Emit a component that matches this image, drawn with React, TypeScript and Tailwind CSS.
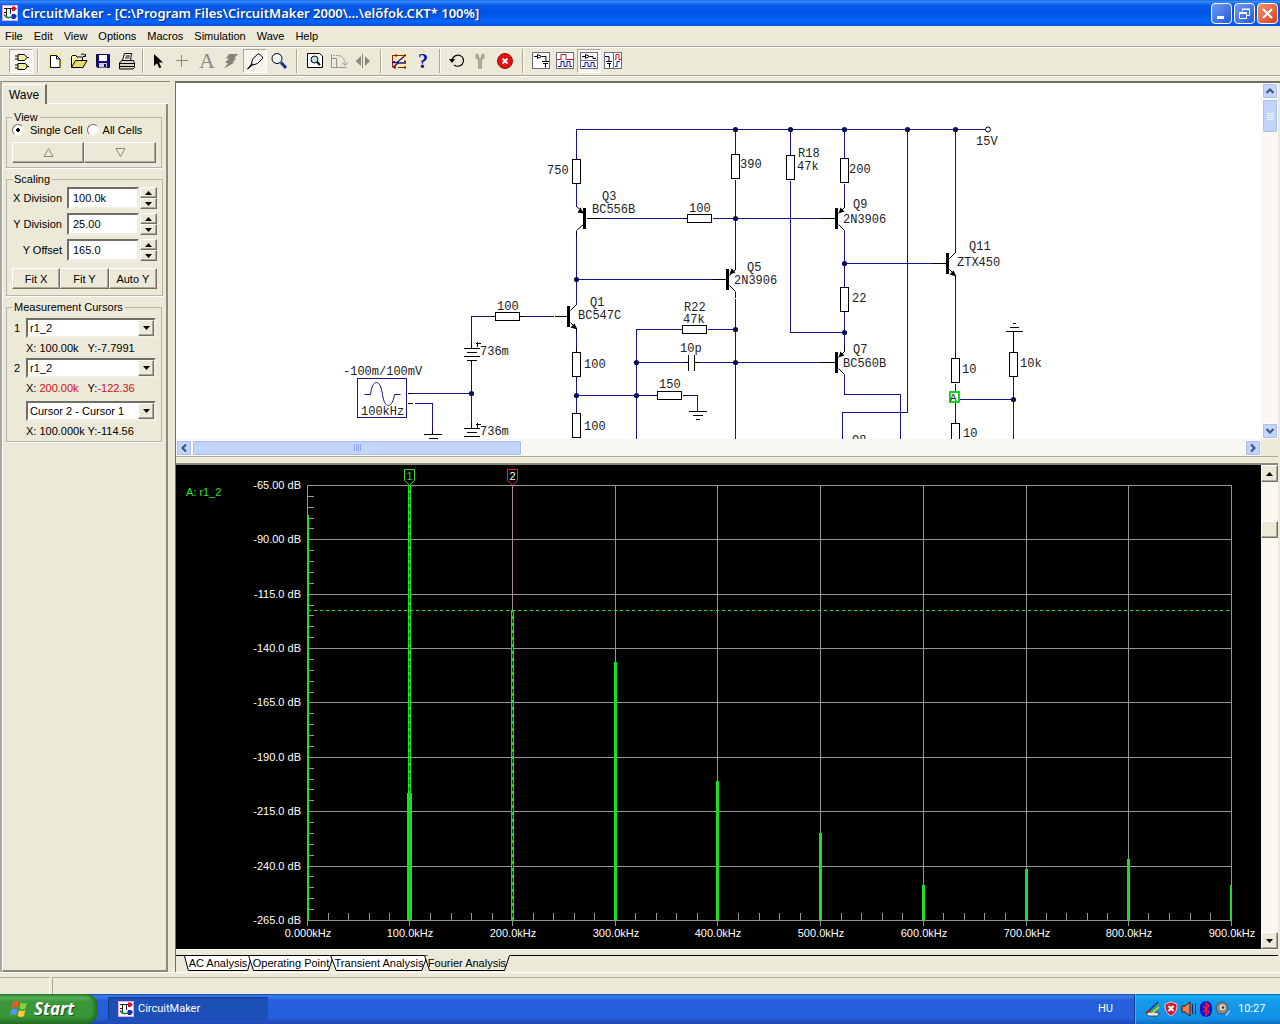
import React from 'react';

const MENUS = ['File', 'Edit', 'View', 'Options', 'Macros', 'Simulation', 'Wave', 'Help'];

const bevel = 'bg-[#ece9d8] border border-t-white border-l-white border-r-[#716f64] border-b-[#716f64] shadow-[inset_-1px_-1px_0_#aca899]';
const sunken = 'bg-white border-2 border-t-[#716f64] border-l-[#716f64] border-r-[#f1efe2] border-b-[#f1efe2]';

/* ---------- icons ---------- */

const AppIcon = () => (
  <svg width="16" height="16" viewBox="0 0 16 16" className="shrink-0" aria-hidden="true">
    <rect width="16" height="16" fill="#fff" stroke="#e9a6dc" strokeWidth="2" />
    <path d="M2 3.500H10M2 7.500H5M4.500 3V12.500H9M8.500 4V9" stroke="#222" fill="none" />
    <path d="M10 1.500h2.500l2.500 2-2.500 2.500H10z" fill="#d3142c" />
    <path d="M10 9h3l2 2-2 3h-3l-1-2z" fill="#1a2bb8" />
    <path d="M2 9.500c2 3 5 4 8 2" stroke="#1d8a4c" fill="none" strokeWidth="1.500" />
  </svg>
);

type IconProps = { children: React.ReactNode };
const Ico = ({ children }: IconProps) => (
  <svg width="20" height="20" viewBox="0 0 20 20" fill="none" stroke="#000" className="shrink-0" aria-hidden="true">
    {children}
  </svg>
);

const icons: Record<string, React.ReactNode> = {
  gates: (
    <Ico>
      <path d="M7 3.500h6.500l2.500 3-2.500 3H7zM7 12.500h7l2 1.500v2l-2 2.500H7z" fill="#f4f0a0" />
      <path d="M4 5h3M4 8h3M16 6.500h2M4 14h3M4 17h3M16 15.500h2" />
    </Ico>
  ),
  new: (
    <Ico>
      <path d="M3 2l3 3M9 1v3M16 2l-3 3M2 9h3M15 12h3M3 17l3-3M17 17l-3-3" stroke="#f3f065" strokeWidth="2" />
      <path d="M5.500 4.500h6l3.500 3.500v8.500h-9.500z" fill="#fff" />
      <path d="M11.500 4.500v3.500h3.500" />
    </Ico>
  ),
  open: (
    <Ico>
      <path d="M2.500 16V5.500l1-1h3.500l1 1.500h5.500v3" fill="#f7f3a0" />
      <path d="M2.500 16.500l4-7h11.500l-4 7z" fill="#e3dc6b" />
      <path d="M12 3.500c2-1 3.500-.5 4.500 1.500m0-2v2.500h-2.500" />
    </Ico>
  ),
  save: (
    <Ico>
      <path d="M3.500 3.500h13v13h-12l-1-1z" fill="#10107c" stroke="#0a0a50" />
      <path d="M6 4h8v6H6z" fill="#fff" stroke="none" />
      <path d="M6 12h8v4.500H6z" fill="#c8c8d8" stroke="none" />
      <path d="M11 13h2v3h-2z" fill="#10107c" stroke="none" />
    </Ico>
  ),
  print: (
    <Ico>
      <path d="M5.500 9.500l2-7h7l-1 7" fill="#fff" />
      <path d="M8.500 5h4.500M8 7h4.500" />
      <path d="M2.500 12l2-2.500h12l1 2v5l-1.500 1.500h-13.500z" fill="#d8d5c6" />
      <path d="M2.500 12.500h15M3 15.500h14" />
    </Ico>
  ),
  arrow: (
    <Ico>
      <path d="M5 3v12l3-2.800 2.300 5 2-.9-2.300-4.800h4z" fill="#000" stroke="none" />
    </Ico>
  ),
  plus: (
    <Ico>
      <path d="M3 9.500h12M8.500 4v12" stroke="#8c8a80" />
    </Ico>
  ),
  text: <span className="font-['Liberation_Serif',serif] text-[22px] leading-5 text-[#8a887e]">A</span>,
  bolt: (
    <Ico>
      <path d="M8 3h9l-4 4.500h2.500l-4 4h2L3 17.500l4-5.500H4l4-4.500H5z" fill="#85837a" stroke="none" />
    </Ico>
  ),
  probe: (
    <Ico>
      <path d="M2.500 18l4.500-5.500 1 1z" fill="#000" />
      <path d="M6.500 12l1.500-4.500 5-4.500h1.500l3 3v1.500l-5 5-4.500 1.500z" fill="#f6f4ec" />
    </Ico>
  ),
  zoom: (
    <Ico>
      <circle cx="8" cy="7.500" r="5" fill="#eef6f6" />
      <path d="M12 11.500l5 5.500" stroke="#1d2d9c" strokeWidth="3" />
    </Ico>
  ),
  fit: (
    <Ico>
      <path d="M2.500 2.500h12l3 2.500v11.500h-15z" fill="#fff" />
      <circle cx="9.500" cy="8.500" r="3.500" fill="#bfe3e0" />
      <path d="M12 11l3 3" strokeWidth="2" />
    </Ico>
  ),
  rotate: (
    <Ico>
      <path d="M2.500 3v13.500h15M2.500 7.500h5v9" stroke="#95938a" />
      <path d="M4 4.500h5c4 0 6.500 3 7 8" stroke="#95938a" strokeDasharray="2 1" />
      <path d="M13.500 11.500l2.500 3 2.500-3" stroke="#95938a" />
    </Ico>
  ),
  mirror: (
    <Ico>
      <path d="M8 5v10l-5.500-5zM12 5v10l5-5z" fill="#8c8a80" stroke="none" />
      <path d="M9.500 3v14" stroke="#8c8a80" />
    </Ico>
  ),
  wires: (
    <Ico>
      <rect x="3" y="2" width="15" height="16" fill="#f8f0b4" stroke="none" />
      <path d="M3 4.500h14M3.500 4.500v12M3 10.500h3M9 16.500h8" stroke="#b01818" />
      <path d="M3 11.500h5l7-6M4 16.500l5-4.500h8" stroke="#16168e" strokeWidth="1.400" />
      <path d="M6 3.500h2v2H6zM15 3.500h2v2h-2zM5 15.500h2v2H5zM15 9.500h2v2h-2zM15 15.500h2v2h-2z" fill="#8c1010" stroke="none" />
    </Ico>
  ),
  help: <span className="font-['Liberation_Serif',serif] text-xl leading-5 text-[#1414a0] font-bold">?</span>,
  reset: (
    <Ico>
      <path d="M5 9c1-4 5-5.500 8-4.500 4 1.500 4.500 6 2 9-2 2-5.500 2.300-8 .5" strokeWidth="1.200" />
      <path d="M2 8h6l-3 4z" fill="#000" stroke="none" />
    </Ico>
  ),
  wrench: (
    <Ico>
      <path d="M5 3v4l2.500 2v8c0 1 3 1 3 0V9l2.500-2V3l-2.500 1v3h-3V4z" fill="#b4b1a4" stroke="#a19e92" />
    </Ico>
  ),
  stop: (
    <Ico>
      <circle cx="10" cy="10" r="7.500" fill="#e01212" stroke="#a00a0a" />
      <path d="M7.500 7.500l5 5M12.500 7.500l-5 5" stroke="#fff" strokeWidth="1.800" />
    </Ico>
  ),
  schem: (
    <Ico>
      <rect x="1.500" y="1.500" width="17" height="16" fill="#fff" stroke="#6c6a80" />
      <path d="M3 5.500h3M6.500 3.500v4l4-2zM11 5.500h4v5M11 10.500h7M12 12.500h5M14.500 12.500v4" />
    </Ico>
  ),
  waves: (
    <Ico>
      <rect x="1.500" y="1.500" width="17" height="16" fill="#fff" stroke="#6c6a80" />
      <path d="M2 8.500h4v-5h5v5h7" stroke="#c01818" />
      <path d="M3 15.500h3v-5h3v5h3v-5h3v5h2" stroke="#16168e" />
    </Ico>
  ),
  split: (
    <Ico>
      <rect x="1.500" y="1.500" width="17" height="16" fill="#fff" stroke="#6c6a80" />
      <path d="M2 9.500h16" stroke="#6c6a80" />
      <path d="M3 5.500h3M6.500 3.500v4l4-2zM11 5.500h3v2h3" />
      <path d="M3 15.500h3v-4h3v4h3v-4h3v4h2" stroke="#16168e" />
    </Ico>
  ),
  side: (
    <Ico>
      <rect x="1.500" y="1.500" width="17" height="16" fill="#fff" stroke="#6c6a80" />
      <path d="M10.500 2v15" stroke="#6c6a80" />
      <path d="M2 5.500h4v5M3 10.500h6M4 12.500h4M6.500 12.500v4" />
      <path d="M12 8.500h1v-5h3v5h2" stroke="#c01818" />
      <path d="M12 15.500h2v-5h3" stroke="#16168e" />
    </Ico>
  ),
};

const TOOL_GROUPS: { gap: string; items: [string, string, boolean?][] }[] = [
  { gap: '', items: [['gates', 'Parts', true]] },
  { gap: 'w-2.5', items: [['new', 'New'], ['open', 'Open'], ['save', 'Save'], ['print', 'Print']] },
  { gap: 'w-2', items: [['arrow', 'Arrow'], ['plus', 'Wire'], ['text', 'Text'], ['bolt', 'Delete'], ['probe', 'Probe', true], ['zoom', 'Zoom']] },
  { gap: 'w-3', items: [['fit', 'Fit'], ['rotate', 'Rotate'], ['mirror', 'Mirror']] },
  { gap: 'w-3', items: [['wires', 'Mode'], ['help', 'Help']] },
  { gap: 'w-2.5', items: [['reset', 'Reset'], ['wrench', 'Setup'], ['stop', 'Stop']] },
  { gap: 'w-3', items: [['schem', 'Schematic'], ['waves', 'Waveforms'], ['split', 'Split horizontal', true], ['side', 'Split vertical']] },
];

const Toolbar = () => (
  <div className="flex h-[30px] items-center border-y border-[#aca899] pl-[9px] shadow-[inset_0_1px_0_#fff,0_1px_0_#fff]">
    {TOOL_GROUPS.map((group, i) => (
      <React.Fragment key={i}>
        {group.gap && (
          <div className={`${group.gap} flex h-6 justify-center`}>
            <div className="w-0.5 border-l border-[#aca899] bg-white" />
          </div>
        )}
        {group.items.map(([name, label, pressed]) => (
          <button
            key={name}
            aria-label={label}
            className={`flex size-6 items-center justify-center ${pressed ? 'border border-t-[#aca899] border-l-[#aca899] border-r-white border-b-white bg-[#f6f4ec]' : ''}`}
          >
            {icons[name]}
          </button>
        ))}
      </React.Fragment>
    ))}
  </div>
);

/* ---------- side panel ---------- */

const Group = ({ title, children }: { title: string; children: React.ReactNode }) => (
  <fieldset className="border border-[#b9b6a5] px-[5px] shadow-[0_1px_0_#fff]">
    <legend className="px-0.5 leading-3">{title}</legend>
    {children}
  </fieldset>
);

const Tri = ({ up = false }: { up?: boolean }) => (
  <svg width="7" height="4" viewBox="0 0 7 4" aria-hidden="true">
    <path d={up ? 'M0 4L3.500 0L7 4z' : 'M0 0L3.500 4L7 0z'} fill="#000" />
  </svg>
);

const ScaleRow = ({ label, value }: { label: string; value: string }) => (
  <div className="flex h-[22px] items-center">
    <label htmlFor={label} className="w-[50px] text-right whitespace-nowrap">{label}</label>
    <input id={label} defaultValue={value} className={`${sunken} ml-[5px] h-[22px] w-[72px] px-1`} />
    <div className="ml-px flex w-[17px] flex-col">
      <button aria-label={`${label} up`} className={`${bevel} flex h-[11px] items-center justify-center`}><Tri up /></button>
      <button aria-label={`${label} down`} className={`${bevel} flex h-[11px] items-center justify-center`}><Tri /></button>
    </div>
  </div>
);

const Combo = ({ label, value }: { label: string; value: string }) => (
  <div className="relative flex-1">
    <select aria-label={label} defaultValue={value} className={`${sunken} block h-5 w-full appearance-none px-0.5 leading-4`}>
      <option>{value}</option>
    </select>
    <span className={`${bevel} pointer-events-none absolute top-0.5 right-0.5 flex h-4 w-4 items-center justify-center`}>
      <Tri />
    </span>
  </div>
);

const SidePanel = () => (
  <aside className="flex w-[170px] shrink-0 flex-col border-t border-l-2 border-t-[#8b897c] border-l-[#aca899] pt-0.5 pr-0.5">
    <div className="flex h-5 items-end">
      <button className="h-5 w-[45px] border-t border-r-2 border-l border-t-white border-r-[#716f64] border-l-white text-[12px] leading-4">Wave</button>
      <div className="h-px flex-1 bg-white" />
    </div>
    <div className="flex flex-1 flex-col gap-[5px] border-r-2 border-b-2 border-l border-r-[#8b897c] border-b-[#8b897c] border-l-white px-[3px] pt-[7px] pr-1">
      <Group title="View">
        <div className="flex h-[19px] items-start">
          <label className="flex items-center gap-1.5 whitespace-nowrap">
            <input type="radio" name="cells" defaultChecked className="size-3 appearance-none rounded-full border border-t-[#716f64] border-l-[#716f64] border-r-[#f1efe2] border-b-[#f1efe2] bg-white bg-[radial-gradient(circle,#000_0_2px,#fff_2px)]" />
            Single Cell
          </label>
          <label className="ml-1 flex items-center gap-1 whitespace-nowrap">
            <input type="radio" name="cells" className="size-3 appearance-none rounded-full border border-t-[#716f64] border-l-[#716f64] border-r-[#f1efe2] border-b-[#f1efe2] bg-white" />
            All Cells
          </label>
        </div>
        <div className="mb-1 flex">
          {[true, false].map((up) => (
            <button key={String(up)} aria-label={up ? 'Previous cell' : 'Next cell'} className={`${bevel} flex h-[21px] flex-1 items-center justify-center`}>
              <svg width="11" height="9" viewBox="0 0 11 9" fill="none" stroke="#8b897c" aria-hidden="true">
                <path d={up ? 'M1 8.500L5.500 .5L10 8.500z' : 'M1 .5L5.500 8.500L10 .5z'} />
              </svg>
            </button>
          ))}
        </div>
      </Group>

      <Group title="Scaling">
        <div className="flex flex-col gap-1 pt-0.5">
          <ScaleRow label="X Division" value="100.0k" />
          <ScaleRow label="Y Division" value="25.00" />
          <ScaleRow label="Y Offset" value="165.0" />
        </div>
        <div className="mt-[7px] mb-1.5 flex">
          {['Fit X', 'Fit Y', 'Auto Y'].map((t) => (
            <button key={t} className={`${bevel} h-[21px] flex-1 whitespace-nowrap`}>{t}</button>
          ))}
        </div>
      </Group>

      <Group title="Measurement Cursors">
        <div className="flex gap-1.5 pt-[5px]">
          <span className="w-2 pl-0.5 leading-5">1</span>
          <Combo label="Cursor 1" value="r1_2" />
        </div>
        <p className="flex h-5 items-center pl-3.5 whitespace-pre">X: 100.00k   Y:-7.7991</p>
        <div className="flex gap-1.5">
          <span className="w-2 pl-0.5 leading-5">2</span>
          <Combo label="Cursor 2" value="r1_2" />
        </div>
        <p className="flex h-5 items-center pl-3.5 whitespace-pre">
          X: <span className="text-[#d01020]">200.00k</span>   Y:<span className="text-[#d01020]">-122.36</span>
        </p>
        <div className="mt-[3px] flex pl-3.5">
          <Combo label="Difference" value="Cursor 2 - Cursor 1" />
        </div>
        <p className="flex h-5 items-center pl-3.5 whitespace-pre">X: 100.000k Y:-114.56</p>
      </Group>
    </div>
  </aside>
);

/* ---------- schematic ---------- */

// Wires, in sheet coordinates
const WIRES =
  'M576 159V129H984M576 183V206M576 236V304M600 218H682M712 218H820M735 129V154M735 179V262M735 298V439' +
  'M790 129V155M790 180V332H844M844 129V158M844 183V200M844 230V287M844 311V345M844 263H932M576 279H712' +
  'M844 374V394H900V439M907 129V412H842V439M955 129V248M955 279V352M955 383V418M958 399H1013M1013 376V439' +
  'M471 342V316H489M524 316H553M471 364V422M412 393H471M414 403H432V430M576 332V347M576 376V413M576 395H652' +
  'M687 395H697V411M682 329H636V439M707 329H735M636 362H682M699 362H820';

const LEADS =
  'M576 154V159M576 183V189M576 230V236M586 218H600M682 218H687M712 218H722M820 218H835M712 279H726M735 262V269' +
  'M735 291V297M844 200V207M844 345V351M820 362H835M844 282V287M932 263H946M955 248V252M955 275V279M955 352V358' +
  'M955 383V388M955 418V423M1013 346V352M1013 331V346M1013 376V381M489 316H495M519 316H528M554 316H567M576 300V304' +
  'M576 328V334M576 347V352M576 376V381M576 407V413M652 395H657M682 395H687M682 362H688M694 362H703' +
  'M407 393H412M407 403H412M471 342V348M471 360V366M471 422V428M432 428V434' +
  'M463 348H479M466 352H476M463 356H479M466 360H476M463 428H479M466 432H476M463 436H479' +
  'M475 343H480M477 341V346M475 424H480M477 422V427' +
  'M688 354V370M694 354V370M423 434H441M428 438H437M688 411H706M692 415H702M695 419H699' +
  'M1012 323H1015M1009 327H1018M1005 331H1022';

const DIAGONALS =
  'M576 206L583 212M583 224L576 230M735 269L729 275M729 285L735 291M844 207L838 213M838 224L844 230' +
  'M844 351L838 357M838 368L844 374M955 252L949 258M949 269L955 275M576 304L570 310M570 322L576 328';

const ARROWS =
  'M583 213l-6-1 3-5zM729 274l6-2-4-4zM838 213l6-2-4-4zM838 357l6-2-4-4zM956 276l-7-2 4-4zM577 329l-7-2 4-4z';

const V_RESISTORS = [[576, 159], [735, 154], [790, 155], [844, 158], [844, 287], [576, 352], [576, 413], [955, 358], [955, 423], [1013, 352]];
const H_RESISTORS = [[687, 218], [495, 316], [682, 329], [657, 395]];
const BARS = [[583, 208], [567, 306], [726, 269], [835, 208], [835, 352], [946, 253]];
const DOTS = [[735, 129], [790, 129], [844, 129], [907, 129], [955, 129], [735, 218], [844, 263], [844, 332], [576, 279], [735, 329], [735, 362], [636, 362], [636, 395], [576, 395], [471, 393], [1013, 399]];

const LABELS: [number, number, string][] = [
  [547, 174, '750'], [602, 200, 'Q3'], [592, 213, 'BC556B'], [497, 310, '100'], [590, 306, 'Q1'], [578, 319, 'BC547C'],
  [480, 355, '736m'], [480, 435, '736m'], [584, 368, '100'], [584, 430, '100'], [343, 375, '-100m/100mV'], [361, 415, '100kHz'],
  [740, 168, '390'], [798, 157, 'R18'], [797, 170, '47k'], [849, 173, '200'], [853, 208, 'Q9'], [843, 223, '2N3906'],
  [689, 212, '100'], [747, 271, 'Q5'], [734, 284, '2N3906'], [684, 311, 'R22'], [683, 323, '47k'], [680, 352, '10p'],
  [659, 388, '150'], [852, 302, '22'], [853, 353, 'Q7'], [843, 367, 'BC560B'], [852, 444, 'Q8'], [976, 145, '15V'],
  [969, 250, 'Q11'], [957, 266, 'ZTX450'], [962, 373, '10'], [1020, 367, '10k'], [963, 437, '10'],
];

const Schematic = () => (
  <svg width="1085" height="356" viewBox="176 83 1085 356" className="block shrink-0" role="img" aria-label="Schematic">
    <g transform="translate(.5 .5)" fill="none" shapeRendering="crispEdges">
      <path d={LEADS} stroke="#000" />
      <path d={WIRES} stroke="#14148c" />
      {V_RESISTORS.map(([x, y]) => <rect key={`${x}-${y}`} x={x - 4} y={y} width="8" height="24" fill="#fff" stroke="#000" />)}
      {H_RESISTORS.map(([x, y]) => <rect key={`${x}-${y}`} x={x} y={y - 4} width="24" height="8" fill="#fff" stroke="#000" />)}
      <rect x="357" y="378" width="49" height="39" stroke="#14148c" />
      <rect x="949" y="391" width="9" height="10" fill="#fff" stroke="#14d820" strokeWidth="2" />
    </g>
    <g transform="translate(.5 .5)" fill="none">
      <path d={DIAGONALS} stroke="#000" />
      <path d={ARROWS} fill="#000" />
      <path d="M364 394h6c1-8 3-12 6-12s5 5 6 12c1 7 3 11 6 11s5-5 6-11h6" stroke="#14148c" />
      <circle cx="987.500" cy="129" r="2.500" fill="#fff" stroke="#000" />
      {DOTS.map(([x, y]) => <circle key={`${x}-${y}`} cx={x} cy={y} r="2.600" fill="#0c0c5c" />)}
    </g>
    {BARS.map(([x, y]) => <rect key={`${x}-${y}`} x={x} y={y} width="3" height="21" fill="#000" />)}
    <g className="font-['Liberation_Mono',monospace] text-[12px]" fill="#222">
      {LABELS.map(([x, y, t]) => <text key={`${x}-${y}`} x={x} y={y}>{t}</text>)}
      <text x="950" y="401" fontSize="11">A</text>
    </g>
  </svg>
);

/* ---------- Fourier chart ---------- */

const GRID_X = [307, 409, 512, 615, 717, 820, 923, 1026, 1128, 1231];
const Y0 = 485;
const DX = 102.62;
const DY = 54.37;
const BASE = 920;
const Y_LABELS = ['-65.00', '-90.00', '-115.0', '-140.0', '-165.0', '-190.0', '-215.0', '-240.0', '-265.0'];
const HARMONICS = [[614, 662], [716, 781], [819, 833], [922, 885], [1025, 869], [1127, 859]];
const gridY = (i: number) => Math.round(Y0 + i * DY);
const minor = (n: number) => Array.from({ length: n * 5 }, (_, i) => i).filter((i) => i % 5);

const Chart = () => (
  <svg width="1085" height="484" viewBox="176 465 1085 484" className="block shrink-0" role="img" aria-label="Fourier analysis">
    <g fill="#94949a" shapeRendering="crispEdges">
      {Y_LABELS.map((t, i) => <rect key={t} x="307" y={gridY(i)} width="925" height="1" />)}
      {GRID_X.map((x) => <rect key={x} x={x} y="485" width="1" height="441" />)}
      {minor(8).map((i) => <rect key={i} x="308" y={gridY(i / 5)} width="6" height="1" />)}
      {minor(9).map((i) => <rect key={i} x={Math.floor(307.5 + (i * DX) / 5)} y="913" width="1" height="7" />)}
    </g>
    <g fill="#1ce01c" shapeRendering="crispEdges">
      <rect x="307" y="515" width="2" height="405" />
      <rect x="408" y="485" width="3" height="308" />
      <rect x="407" y="793" width="5" height="127" />
      <rect x="511" y="610" width="3" height="310" />
      {HARMONICS.map(([x, y]) => <rect key={x} x={x} y={y} width="3" height={BASE - y} />)}
      <rect x="1230" y="885" width="2" height="35" />
    </g>
    <g fill="none" shapeRendering="crispEdges">
      <path d="M308 610.500H1231" stroke="#34d634" strokeDasharray="3 3" />
      <path d="M409.500 486V793M512.500 612V920" stroke="#064006" strokeDasharray="4 3" />
      <path d="M409.500 793V920" stroke="#5c9c5c" strokeDasharray="4 3" />
      <path d="M512.500 485V610" stroke="#a88a9a" />
    </g>
    <path d="M404.500 469.500h10v11l-5 4.500-5-4.500z" fill="#000" stroke="#34d634" />
    <path d="M507.500 469.500h10v11l-5 4.500-5-4.500z" fill="#000" stroke="#f02030" />
    <g className="font-['Liberation_Sans',sans-serif] text-[11px]" fill="#fff">
      <text x="409.500" y="480" textAnchor="middle" fill="#34d634">1</text>
      <text x="512.500" y="480" textAnchor="middle">2</text>
      <text x="186" y="496" fill="#34e034">A: r1_2</text>
      {Y_LABELS.map((t, i) => <text key={t} x="301" y={gridY(i) + 4} textAnchor="end">{t} dB</text>)}
      {GRID_X.map((x, i) => (
        <text key={x} x={x + 1} y="937" textAnchor="middle">{i === 0 ? '0.000' : `${i}00.0`}kHz</text>
      ))}
    </g>
  </svg>
);

/* ---------- scroll bars ---------- */

const xpFace = 'rounded-xs border border-white bg-[#c3d5fd] shadow-[0_0_0_1px_#a9bfeb_inset]';

const XpArrow = ({ turn, label }: { turn: string; label: string }) => (
  <button aria-label={label} className={`${xpFace} flex size-4 shrink-0 items-center justify-center`}>
    <svg width="10" height="10" viewBox="0 0 10 10" className={turn} fill="none" stroke="#3d5889" strokeWidth="2.200" aria-hidden="true">
      <path d="M1.500 7L5 3.500L8.500 7" />
    </svg>
  </button>
);

const ClassicArrow = ({ up = false }: { up?: boolean }) => (
  <button aria-label={up ? 'Scroll up' : 'Scroll down'} className={`${bevel} flex h-[17px] items-center justify-center`}>
    <Tri up={up} />
  </button>
);

/* ---------- bottom tabs ---------- */

const TABS: [string, string][] = [
  ['AC Analysis', 'w-[68px]'],
  ['Operating Point', 'w-[86px]'],
  ['Transient Analysis', 'w-[98px]'],
  ['Fourier Analysis', 'w-[86px]'],
];

const AnalysisTabs = () => (
  <nav className="flex h-[23px] border-t border-white pt-[5px]">
    <div className="h-px w-2 bg-black" />
    {TABS.map(([name, width], i) => {
      const active = i === 3;
      return (
        <button key={name} className={`${width} relative -mr-1 flex h-4 items-center justify-center whitespace-nowrap`}>
          <svg className="absolute inset-0 size-full" viewBox="0 0 86 16" preserveAspectRatio="none" aria-hidden="true">
            <path d="M.5 .5L5.500 15.500H80.500L85.500 .5" fill={active ? '#ece9d8' : '#fff'} stroke="#000" vectorEffect="non-scaling-stroke" />
            {!active && <path d="M0 .5H86" stroke="#000" vectorEffect="non-scaling-stroke" />}
          </svg>
          <span className="relative">{name}</span>
        </button>
      );
    })}
    <div className="ml-1 h-px flex-1 bg-black" />
  </nav>
);

/* ---------- taskbar ---------- */

const Taskbar = () => (
  <footer className="flex h-[30px] items-stretch bg-[linear-gradient(#1941a5_0,#3a80f0_2px,#2860dc_6px,#245edb_24px,#1c48b0_30px)] font-['Roboto',sans-serif] text-white">
    <button className="flex w-[98px] items-center gap-1 rounded-r-xl bg-[linear-gradient(#2f7a2f_0,#58b558_3px,#3c963c_8px,#389838_22px,#266f26_30px)] pl-2.5 shadow-[inset_-3px_0_4px_#22662a]">
      <svg width="20" height="20" viewBox="0 0 20 20" aria-hidden="true">
        <path d="M3 3c2-1.500 4-1.500 6 0L8 9c-2-1.300-4-1.300-6.500 0z" fill="#ef5b2a" />
        <path d="M10.500 3.500c2 1.300 4 1.300 6.500 0l-1.500 6c-2 1.300-4 1.300-6 0z" fill="#8cd03c" />
        <path d="M1.200 10.500c2-1.500 4-1.500 6.300 0l-1.300 6c-2-1.500-4-1.500-6 0z" fill="#5b93f5" />
        <path d="M9 11c2 1.300 4 1.300 6.300 0L14 17c-2 1.300-4 1.300-6.300 0z" fill="#fbcb36" />
      </svg>
      <span className="font-['Noto_Sans',sans-serif] text-[17px] font-bold italic [text-shadow:1px_1px_1px_#1c4a1c]">Start</span>
    </button>
    <button className="my-[3px] ml-2.5 flex w-40 items-center gap-1 rounded-xs bg-[#1c50b8] pl-2.5 text-[11px] shadow-[inset_1px_1px_1px_#123a8c]">
      <AppIcon />
      CircuitMaker
    </button>
    <div className="flex-1" />
    <span className="mr-[21px] self-center text-[11px]">HU</span>
    <div className="flex w-[146px] items-center gap-[3px] border-l border-[#0c3c98] bg-[linear-gradient(#0c59b9_0,#1cb0f8_2px,#139ee9_6px,#1290e8_24px,#0d6fc0_30px)] pl-2.5 text-[11px] shadow-[inset_1px_0_0_#2cc0fa]">
      <svg width="16" height="16" viewBox="0 0 16 16" aria-hidden="true">
        <path d="M1 11h8l5 1-1 3H3z" fill="#e8e8e8" stroke="#333" strokeWidth=".8" />
        <path d="M3 11L13 1" stroke="#1838c0" strokeWidth="2" />
        <path d="M5 11.500L14 3" stroke="#20c040" strokeWidth="2" />
        <path d="M7 12l7-6" stroke="#f0d020" strokeWidth="1.500" />
        <path d="M1 12l4-3" stroke="#c01818" strokeWidth="2" />
      </svg>
      <svg width="14" height="16" viewBox="0 0 14 16" aria-hidden="true">
        <path d="M7 1l6 2c0 6-1 9-6 12C2 12 1 9 1 3z" fill="#d8182c" stroke="#e8c8cc" />
        <path d="M4.500 5l5 5M9.500 5l-5 5" stroke="#fff" strokeWidth="2" />
      </svg>
      <svg width="16" height="16" viewBox="0 0 16 16" aria-hidden="true">
        <path d="M1 5h3l5-4v14l-5-4H1z" fill="#f08048" stroke="#401408" />
        <path d="M11.500 3v10M14.500 2v12" stroke="#182858" />
      </svg>
      <svg width="12" height="16" viewBox="0 0 12 16" aria-hidden="true">
        <rect width="12" height="16" rx="6" fill="#1212c8" />
        <path d="M3 5l6 6-3 3V2l3 3-6 6" fill="none" stroke="#f01830" strokeWidth="1.600" />
      </svg>
      <svg width="16" height="16" viewBox="0 0 16 16" aria-hidden="true">
        <circle cx="7" cy="7" r="6" fill="#8a8a88" stroke="#4c4c4c" />
        <circle cx="7.500" cy="6.500" r="3" fill="#d8d8d4" />
        <circle cx="8" cy="6.500" r="1.300" fill="#333" />
        <path d="M11 14.500l3.500-5" stroke="#9cc4f4" strokeWidth="1.500" />
      </svg>
      <time className="ml-1">10:27</time>
    </div>
  </footer>
);

export default function App() {
  return (
    <div className="flex min-h-screen flex-col overflow-hidden bg-[#ece9d8] font-['Liberation_Sans',sans-serif] text-[11px] leading-3.5 text-black">
      <header className="flex h-[26px] items-center bg-[linear-gradient(#0a4fd0_0,#3a93ff_1px,#0a5ce8_5px,#0054e3_12px,#0464fa_22px,#0350d8_26px)] px-0.5 text-white">
        <AppIcon />
        <h1 className="ml-1 flex-1 font-['Noto_Sans',sans-serif] text-[13px] leading-5 font-semibold whitespace-nowrap [text-shadow:1px_1px_1px_#0a2a80]">
          CircuitMaker - [C:\Program Files\CircuitMaker 2000\...\előfok.CKT* 100%]
        </h1>
        <div className="flex gap-0.5">
          <button aria-label="Minimize" className="flex size-[21px] items-center justify-center rounded-sm border border-white bg-[linear-gradient(135deg,#6d9cf5,#2459d8)]">
            <svg width="13" height="13"><path d="M2 9h7v3H2z" fill="#fff" /></svg>
          </button>
          <button aria-label="Restore" className="flex size-[21px] items-center justify-center rounded-sm border border-white bg-[linear-gradient(135deg,#6d9cf5,#2459d8)]">
            <svg width="13" height="13" fill="none" stroke="#fff">
              <path d="M4.500 4V2.500h7v6H9M4 2h8" />
              <path d="M1.500 5.500h7v6h-7zM1 6.500h8" />
            </svg>
          </button>
          <button aria-label="Close" className="flex size-[21px] items-center justify-center rounded-sm border border-white bg-[linear-gradient(135deg,#f0936c,#d8401c)]">
            <svg width="13" height="13"><path d="M2 2l9 9M11 2l-9 9" stroke="#fff" strokeWidth="2.200" /></svg>
          </button>
        </div>
      </header>

      <nav className="flex h-5 items-center gap-[11px] pl-[5px]">
        {MENUS.map((m) => <button key={m}>{m}</button>)}
      </nav>
      <Toolbar />

      <main className="mt-[5px] flex flex-1">
        <SidePanel />
        <section className="ml-[5px] flex min-w-0 flex-1 flex-col border-t-2 border-l border-[#716f64] pr-0.5">
          <div className="flex">
            <div className="min-w-0 flex-1 overflow-hidden bg-white"><Schematic /></div>
            <div className="flex w-[17px] shrink-0 flex-col bg-[#f8f7f1] pl-px">
              <XpArrow turn="" label="Scroll up" />
              <div className={`${xpFace} flex h-[34px] flex-col items-center justify-center gap-px`}>
                {[0, 1, 2, 3].map((i) => <i key={i} className="h-px w-[7px] bg-[#eef4fe]" />)}
              </div>
              <div className="flex-1" />
              <XpArrow turn="rotate-180" label="Scroll down" />
            </div>
          </div>
          <div className="flex h-[17px] pr-[17px]">
            <div className="flex flex-1 items-center bg-[#f8f7f1]">
              <XpArrow turn="-rotate-90" label="Scroll left" />
              <div className={`${xpFace} flex h-4 w-[330px] items-center justify-center gap-px`}>
                {[0, 1, 2, 3].map((i) => <i key={i} className="h-[7px] w-px bg-[#8caaf0]" />)}
              </div>
              <div className="flex-1" />
              <XpArrow turn="rotate-90" label="Scroll right" />
            </div>
          </div>
          <div className="h-[9px] border-t border-b-2 border-t-[#aca899] border-b-[#8b897c]" />
          <div className="flex flex-1 bg-black">
            <div className="min-w-0 flex-1 overflow-hidden"><Chart /></div>
            <div className="flex w-[17px] shrink-0 flex-col bg-[#f8f6ee]">
              <ClassicArrow up />
              <div className={`${bevel} mt-[39px] h-[17px]`} />
              <div className="flex-1" />
              <ClassicArrow />
            </div>
          </div>
          <AnalysisTabs />
        </section>
      </main>

      <div className="flex h-[22px] gap-0.5 border-t border-white pt-1">
        <div className="w-[50px] border-t border-r border-t-[#aca899] border-r-white" />
        <div className="flex-1 border-t border-l border-[#aca899]" />
      </div>
      <Taskbar />
    </div>
  );
}
